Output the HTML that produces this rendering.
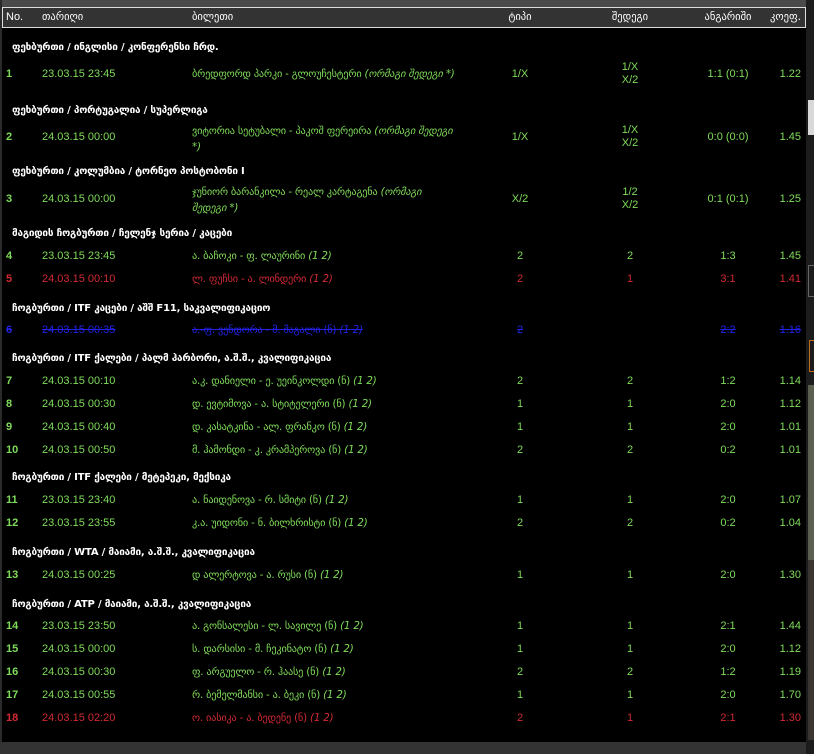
<!DOCTYPE html>
<html><head><meta charset="utf-8"><style>
html,body{margin:0;padding:0}
body{width:814px;height:754px;background:#000;position:relative;overflow:hidden;font-family:"Liberation Sans","DejaVu Sans",sans-serif;font-size:11px}
.a{position:absolute;white-space:nowrap;line-height:13px}
.g{color:#7fdc5a}.r{color:#d22a34}.b{color:#2222e6;text-decoration:line-through}
.n{font-weight:bold;left:6px}
.d{left:42px}
.t{left:192px;font-family:"DejaVu Sans",sans-serif;font-size:10.3px;letter-spacing:-0.2px}
.c1{left:500px;width:40px;text-align:center}
.c2{left:610px;width:40px;text-align:center}
.c3{left:690px;width:76px;text-align:center}
.c4{left:760px;width:41px;text-align:right}
.s{left:12px;color:#fff;font-weight:bold;font-family:"DejaVu Sans",sans-serif;font-size:10px;letter-spacing:-0.2px}
.h{color:#fff;font-family:'DejaVu Sans',sans-serif;font-size:10.5px}
i{font-style:italic}
</style></head><body>
<div style="position:absolute;left:0;top:0;width:814px;height:8px;background:#4a4a4a"></div>
<div style="position:absolute;left:0;top:0;width:2px;height:754px;background:#2a2a2a"></div>
<div style="position:absolute;left:0;top:742px;width:814px;height:12px;background:#333"></div>
<div style="position:absolute;left:806px;top:0;width:8px;height:754px;background:#1c1c1c"></div>
<div style="position:absolute;left:808px;top:100px;width:6px;height:35px;background:#d8d8d8"></div>
<div style="position:absolute;left:808px;top:265px;width:6px;height:30px;border:1px solid #666;border-right:0"></div>
<div style="position:absolute;left:809px;top:340px;width:5px;height:30px;border:1px solid #c06a20;border-right:0"></div>
<div style="position:absolute;left:808px;top:385px;width:6px;height:210px;background:#5a5f50"></div>
<div style="position:absolute;left:808px;top:560px;width:6px;height:180px;background:#3a3530"></div>
<div style="position:absolute;left:2px;top:7px;width:802px;height:19px;background:#333;border:1px solid #ddd"></div>
<div class="a" style="left:6px;top:11px;color:#fff">No.</div>
<div class="a h" style="left:42px;top:11px">თარიღი</div>
<div class="a h" style="left:192px;top:11px">ბილეთი</div>
<div class="a h" style="left:500px;top:11px;width:40px;text-align:center">ტიპი</div>
<div class="a h" style="left:605px;top:11px;width:50px;text-align:center">შედეგი</div>
<div class="a h" style="left:690px;top:11px;width:76px;text-align:center">ანგარიში</div>
<div class="a h" style="left:760px;top:11px;width:41px;text-align:right">კოეფ.</div>

<div class="a s" style="top:41px">ფეხბურთი / ინგლისი / კონფერენსი ჩრდ.</div>
<div class="a g n" style="top:68px">1</div><div class="a g d" style="top:68px">23.03.15 23:45</div>
<div class="a g t" style="top:68px">ბრედფორდ პარკი - გლოუჩესტერი <i>(ორმაგი შედეგი *)</i></div>
<div class="a g c1" style="top:68px">1/X</div><div class="a g c2" style="top:61px">1/X<br>X/2</div>
<div class="a g c3" style="top:68px">1:1 (0:1)</div><div class="a g c4" style="top:68px">1.22</div>

<div class="a s" style="top:104px">ფეხბურთი / პორტუგალია / სუპერლიგა</div>
<div class="a g n" style="top:131px">2</div><div class="a g d" style="top:131px">24.03.15 00:00</div>
<div class="a g t" style="top:123px;line-height:16px">ვიტორია სეტუბალი - პაკოშ ფერეირა <i>(ორმაგი შედეგი<br>*)</i></div>
<div class="a g c1" style="top:131px">1/X</div><div class="a g c2" style="top:124px">1/X<br>X/2</div>
<div class="a g c3" style="top:131px">0:0 (0:0)</div><div class="a g c4" style="top:131px">1.45</div>

<div class="a s" style="top:165px">ფეხბურთი / კოლუმბია / ტორნეო პოსტობონი I</div>
<div class="a g n" style="top:193px">3</div><div class="a g d" style="top:193px">24.03.15 00:00</div>
<div class="a g t" style="top:184px;line-height:16px">ჯუნიორ ბარანკილა - რეალ კარტაგენა <i>(ორმაგი<br>შედეგი *)</i></div>
<div class="a g c1" style="top:193px">X/2</div><div class="a g c2" style="top:186px">1/2<br>X/2</div>
<div class="a g c3" style="top:193px">0:1 (0:1)</div><div class="a g c4" style="top:193px">1.25</div>

<div class="a s" style="top:227px">მაგიდის ჩოგბურთი / ჩელენჯ სერია / კაცები</div>
<div class="a g n" style="top:250px">4</div><div class="a g d" style="top:250px">23.03.15 23:45</div>
<div class="a g t" style="top:250px">ა. ბაჩოკი - ფ. ლაურინი <i>(1 2)</i></div>
<div class="a g c1" style="top:250px">2</div><div class="a g c2" style="top:250px">2</div><div class="a g c3" style="top:250px">1:3</div><div class="a g c4" style="top:250px">1.45</div>
<div class="a r n" style="top:273px">5</div><div class="a r d" style="top:273px">24.03.15 00:10</div>
<div class="a r t" style="top:273px">ლ. ფუჩსი - ა. ლინდერი <i>(1 2)</i></div>
<div class="a r c1" style="top:273px">2</div><div class="a r c2" style="top:273px">1</div><div class="a r c3" style="top:273px">3:1</div><div class="a r c4" style="top:273px">1.41</div>

<div class="a s" style="top:302px">ჩოგბურთი / ITF კაცები / აშშ F11, საკვალიფიკაციო</div>
<div class="a b n" style="top:324px">6</div><div class="a b d" style="top:324px">24.03.15 00:35</div>
<div class="a b t" style="top:324px">ა.-ფ. ვენდორა - მ. მაგალი (ნ) <i>(1 2)</i></div>
<div class="a b c1" style="top:324px">2</div><div class="a b c3" style="top:324px">2:2</div><div class="a b c4" style="top:324px">1.16</div>

<div class="a s" style="top:352px">ჩოგბურთი / ITF ქალები / პალმ ჰარბორი, ა.შ.შ., კვალიფიკაცია</div>
<div class="a g n" style="top:375px">7</div><div class="a g d" style="top:375px">24.03.15 00:10</div>
<div class="a g t" style="top:375px">ა.კ. დანიელი - ე. უეინკოლდი (ნ) <i>(1 2)</i></div>
<div class="a g c1" style="top:375px">2</div><div class="a g c2" style="top:375px">2</div><div class="a g c3" style="top:375px">1:2</div><div class="a g c4" style="top:375px">1.14</div>
<div class="a g n" style="top:398px">8</div><div class="a g d" style="top:398px">24.03.15 00:30</div>
<div class="a g t" style="top:398px">დ. ევტიმოვა - ა. სტიტელერი (ნ) <i>(1 2)</i></div>
<div class="a g c1" style="top:398px">1</div><div class="a g c2" style="top:398px">1</div><div class="a g c3" style="top:398px">2:0</div><div class="a g c4" style="top:398px">1.12</div>
<div class="a g n" style="top:421px">9</div><div class="a g d" style="top:421px">24.03.15 00:40</div>
<div class="a g t" style="top:421px">დ. კასატკინა - ალ. ფრანკო (ნ) <i>(1 2)</i></div>
<div class="a g c1" style="top:421px">1</div><div class="a g c2" style="top:421px">1</div><div class="a g c3" style="top:421px">2:0</div><div class="a g c4" style="top:421px">1.01</div>
<div class="a g n" style="top:444px">10</div><div class="a g d" style="top:444px">24.03.15 00:50</div>
<div class="a g t" style="top:444px">მ. ჰამონდი - კ. კრამპეროვა (ნ) <i>(1 2)</i></div>
<div class="a g c1" style="top:444px">2</div><div class="a g c2" style="top:444px">2</div><div class="a g c3" style="top:444px">0:2</div><div class="a g c4" style="top:444px">1.01</div>

<div class="a s" style="top:471px">ჩოგბურთი / ITF ქალები / მეტეპეკი, მექსიკა</div>
<div class="a g n" style="top:494px">11</div><div class="a g d" style="top:494px">23.03.15 23:40</div>
<div class="a g t" style="top:494px">ა. ნაიდენოვა - რ. სმიტი (ნ) <i>(1 2)</i></div>
<div class="a g c1" style="top:494px">1</div><div class="a g c2" style="top:494px">1</div><div class="a g c3" style="top:494px">2:0</div><div class="a g c4" style="top:494px">1.07</div>
<div class="a g n" style="top:517px">12</div><div class="a g d" style="top:517px">23.03.15 23:55</div>
<div class="a g t" style="top:517px">კ.ა. უიდონი - ნ. ბილხრისტი (ნ) <i>(1 2)</i></div>
<div class="a g c1" style="top:517px">2</div><div class="a g c2" style="top:517px">2</div><div class="a g c3" style="top:517px">0:2</div><div class="a g c4" style="top:517px">1.04</div>

<div class="a s" style="top:546px">ჩოგბურთი / WTA / მაიამი, ა.შ.შ., კვალიფიკაცია</div>
<div class="a g n" style="top:569px">13</div><div class="a g d" style="top:569px">24.03.15 00:25</div>
<div class="a g t" style="top:569px">დ ალერტოვა - ა. რუსი (ნ) <i>(1 2)</i></div>
<div class="a g c1" style="top:569px">1</div><div class="a g c2" style="top:569px">1</div><div class="a g c3" style="top:569px">2:0</div><div class="a g c4" style="top:569px">1.30</div>

<div class="a s" style="top:598px">ჩოგბურთი / ATP / მაიამი, ა.შ.შ., კვალიფიკაცია</div>
<div class="a g n" style="top:620px">14</div><div class="a g d" style="top:620px">23.03.15 23:50</div>
<div class="a g t" style="top:620px">ა. გონსალესი - ლ. სავილე (ნ) <i>(1 2)</i></div>
<div class="a g c1" style="top:620px">1</div><div class="a g c2" style="top:620px">1</div><div class="a g c3" style="top:620px">2:1</div><div class="a g c4" style="top:620px">1.44</div>
<div class="a g n" style="top:643px">15</div><div class="a g d" style="top:643px">24.03.15 00:00</div>
<div class="a g t" style="top:643px">ს. დარსისი - მ. ჩეკინატო (ნ) <i>(1 2)</i></div>
<div class="a g c1" style="top:643px">1</div><div class="a g c2" style="top:643px">1</div><div class="a g c3" style="top:643px">2:0</div><div class="a g c4" style="top:643px">1.12</div>
<div class="a g n" style="top:666px">16</div><div class="a g d" style="top:666px">24.03.15 00:30</div>
<div class="a g t" style="top:666px">ფ. არგუელო - რ. ჰაასე (ნ) <i>(1 2)</i></div>
<div class="a g c1" style="top:666px">2</div><div class="a g c2" style="top:666px">2</div><div class="a g c3" style="top:666px">1:2</div><div class="a g c4" style="top:666px">1.19</div>
<div class="a g n" style="top:689px">17</div><div class="a g d" style="top:689px">24.03.15 00:55</div>
<div class="a g t" style="top:689px">რ. ბემელმანსი - ა. ბეკი (ნ) <i>(1 2)</i></div>
<div class="a g c1" style="top:689px">1</div><div class="a g c2" style="top:689px">1</div><div class="a g c3" style="top:689px">2:0</div><div class="a g c4" style="top:689px">1.70</div>
<div class="a r n" style="top:712px">18</div><div class="a r d" style="top:712px">24.03.15 02:20</div>
<div class="a r t" style="top:712px">ო. იასიკა - ა. ბედენე (ნ) <i>(1 2)</i></div>
<div class="a r c1" style="top:712px">2</div><div class="a r c2" style="top:712px">1</div><div class="a r c3" style="top:712px">2:1</div><div class="a r c4" style="top:712px">1.30</div>
</body></html>
